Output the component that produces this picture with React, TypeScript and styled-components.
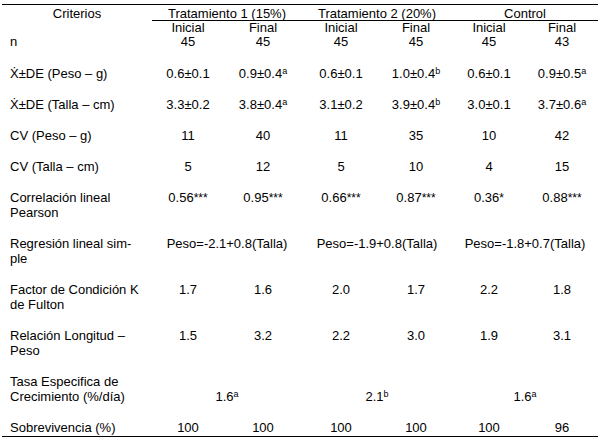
import React from "react";
import styled, { createGlobalStyle } from "styled-components";

const GlobalStyle = createGlobalStyle`
  html, body {
    margin: 0;
    padding: 0;
    background: #ffffff;
  }
`;

const COLUMNS = "150px 72px 78px 78px 72px 74px 72px";

const Page = styled.div`
  width: 600px;
  height: 440px;
  box-sizing: border-box;
  padding: 4px 2px 0;
  font-family: "Liberation Sans", Arial, sans-serif;
  font-size: 13px;
  color: #000;
`;

const Table = styled.div`
  border-top: 1px solid #000;
  border-bottom: 1px solid #000;
`;

const Row = styled.div<{ $gap?: number; $lh?: number }>`
  display: grid;
  grid-template-columns: ${COLUMNS};
  line-height: ${(p) => p.$lh ?? 15}px;
  padding-bottom: ${(p) => p.$gap ?? 16}px;
`;

const HeadRow = styled(Row)`
  padding-top: 2px;
  padding-bottom: 0;
  line-height: 13px;
`;

const Label = styled.div<{ $center?: boolean; $end?: boolean }>`
  padding-left: ${(p) => (p.$center ? 0 : 8)}px;
  text-align: ${(p) => (p.$center ? "center" : "left")};
  align-self: ${(p) => (p.$end ? "end" : "start")};
  white-space: nowrap;
`;

const GroupHead = styled.div`
  grid-column: span 2;
  text-align: center;
  border-bottom: 1px solid #000;
  white-space: nowrap;
`;

const Value = styled.div<{ $span?: number; $end?: boolean }>`
  grid-column: span ${(p) => p.$span ?? 1};
  text-align: center;
  align-self: ${(p) => (p.$end ? "end" : "start")};
  white-space: nowrap;
`;

const Sup = styled.sup`
  font-size: 9px;
  line-height: 0;
  vertical-align: 4px;
`;

const Stars = styled.span`
  font-size: 12px;
`;

type Cell = { text: string; sup?: string; stars?: string };

const v = (text: string, sup?: string): Cell => ({ text, sup });
const s = (text: string, stars: string): Cell => ({ text, stars });

const rows: { label: React.ReactNode; cells: Cell[] }[] = [
  {
    label: "Ẋ±DE (Peso – g)",
    cells: [v("0.6±0.1"), v("0.9±0.4", "a"), v("0.6±0.1"), v("1.0±0.4", "b"), v("0.6±0.1"), v("0.9±0.5", "a")],
  },
  {
    label: "Ẋ±DE (Talla – cm)",
    cells: [v("3.3±0.2"), v("3.8±0.4", "a"), v("3.1±0.2"), v("3.9±0.4", "b"), v("3.0±0.1"), v("3.7±0.6", "a")],
  },
  {
    label: "CV (Peso – g)",
    cells: [v("11"), v("40"), v("11"), v("35"), v("10"), v("42")],
  },
  {
    label: "CV (Talla – cm)",
    cells: [v("5"), v("12"), v("5"), v("10"), v("4"), v("15")],
  },
  {
    label: (
      <>
        Correlación lineal
        <br />
        Pearson
      </>
    ),
    cells: [s("0.56", "***"), s("0.95", "***"), s("0.66", "***"), s("0.87", "***"), s("0.36", "*"), s("0.88", "***")],
  },
];

const rowsAfter: { label: React.ReactNode; cells: Cell[] }[] = [
  {
    label: (
      <>
        Factor de Condición K
        <br />
        de Fulton
      </>
    ),
    cells: [v("1.7"), v("1.6"), v("2.0"), v("1.7"), v("2.2"), v("1.8")],
  },
  {
    label: (
      <>
        Relación Longitud –
        <br />
        Peso
      </>
    ),
    cells: [v("1.5"), v("3.2"), v("2.2"), v("3.0"), v("1.9"), v("3.1")],
  },
];

const CellText: React.FC<{ cell: Cell }> = ({ cell }) => (
  <>
    {cell.text}
    {cell.sup && <Sup>{cell.sup}</Sup>}
    {cell.stars && <Stars>{cell.stars}</Stars>}
  </>
);

const groups = ["Tratamiento 1 (15%)", "Tratamiento 2 (20%)", "Control"];
const counts = ["45", "45", "45", "45", "45", "43"];

const App: React.FC = () => {
  return (
    <>
      <GlobalStyle />
      <Page>
        <Table>
          <HeadRow>
            <Label $center>Criterios</Label>
            {groups.map((g) => (
              <GroupHead key={g}>{g}</GroupHead>
            ))}
          </HeadRow>

          <Row $lh={14} $gap={17}>
            <Label $end>n</Label>
            {counts.map((c, i) => (
              <Value key={i}>
                {i % 2 === 0 ? "Inicial" : "Final"}
                <br />
                {c}
              </Value>
            ))}
          </Row>

          {rows.map((r, i) => (
            <Row key={i}>
              <Label>{r.label}</Label>
              {r.cells.map((c, j) => (
                <Value key={j}>
                  <CellText cell={c} />
                </Value>
              ))}
            </Row>
          ))}

          <Row>
            <Label>
              Regresión lineal sim-
              <br />
              ple
            </Label>
            <Value $span={2}>Peso=-2.1+0.8(Talla)</Value>
            <Value $span={2}>Peso=-1.9+0.8(Talla)</Value>
            <Value $span={2}>Peso=-1.8+0.7(Talla)</Value>
          </Row>

          {rowsAfter.map((r, i) => (
            <Row key={i}>
              <Label>{r.label}</Label>
              {r.cells.map((c, j) => (
                <Value key={j}>
                  <CellText cell={c} />
                </Value>
              ))}
            </Row>
          ))}

          <Row>
            <Label>
              Tasa Especifica de
              <br />
              Crecimiento (%/día)
            </Label>
            <Value $span={2} $end>
              1.6<Sup>a</Sup>
            </Value>
            <Value $span={2} $end>
              2.1<Sup>b</Sup>
            </Value>
            <Value $span={2} $end>
              1.6<Sup>a</Sup>
            </Value>
          </Row>

          <Row $gap={1}>
            <Label>Sobrevivencia (%)</Label>
            {["100", "100", "100", "100", "100", "96"].map((t, i) => (
              <Value key={i}>{t}</Value>
            ))}
          </Row>
        </Table>
      </Page>
    </>
  );
};

export default App;
